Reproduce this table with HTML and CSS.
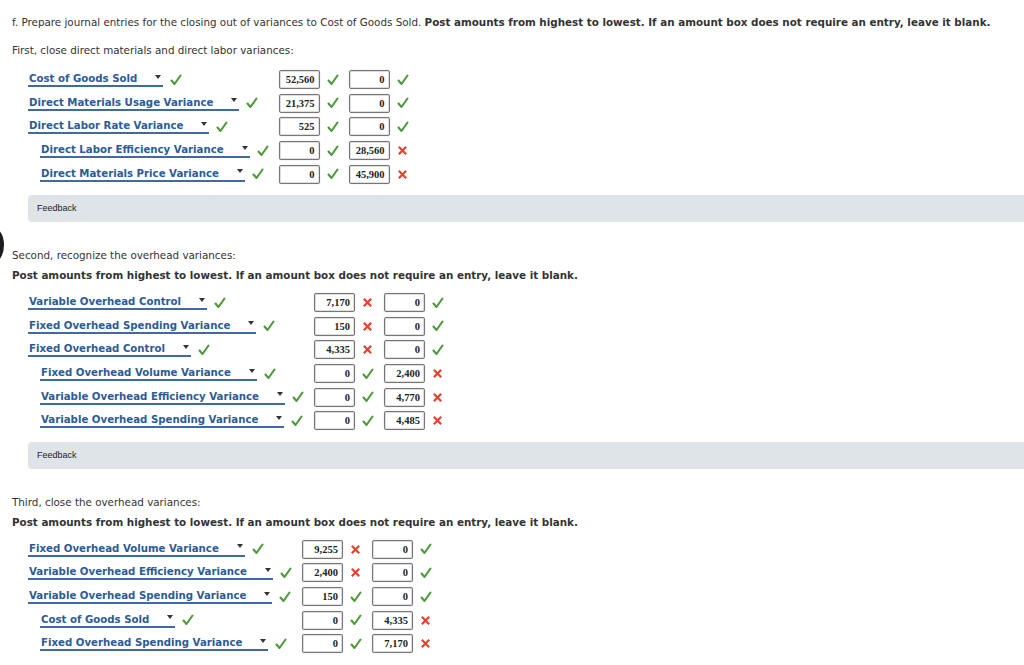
FILE: index.html
```html
<!DOCTYPE html>
<html>
<head>
<meta charset="utf-8">
<link rel="stylesheet" href="styles.css">
</head>
<body>
<div class="page">
  <div class="dot"></div>
  <p class="intro">f. Prepare journal entries for the closing out of variances to Cost of Goods Sold. <b>Post amounts from highest to lowest. If an amount box does not require an entry, leave it blank.</b></p>

  <p class="step s1">First, close direct materials and direct labor variances:</p>
  <div class="entry">
    <div class="lbl"><span class="sel">Cost of Goods Sold<i class="arr"></i></span><svg class="ok" viewBox="0 0 12 12"><path d="M1.5 6.5 L4.5 10 L10.5 1.5"/></svg></div>
    <span class="amt">52,560</span><svg class="ok" viewBox="0 0 12 12"><path d="M1.5 6.5 L4.5 10 L10.5 1.5"/></svg>
    <span class="amt">0</span><svg class="ok" viewBox="0 0 12 12"><path d="M1.5 6.5 L4.5 10 L10.5 1.5"/></svg>

    <div class="lbl"><span class="sel">Direct Materials Usage Variance<i class="arr"></i></span><svg class="ok" viewBox="0 0 12 12"><path d="M1.5 6.5 L4.5 10 L10.5 1.5"/></svg></div>
    <span class="amt">21,375</span><svg class="ok" viewBox="0 0 12 12"><path d="M1.5 6.5 L4.5 10 L10.5 1.5"/></svg>
    <span class="amt">0</span><svg class="ok" viewBox="0 0 12 12"><path d="M1.5 6.5 L4.5 10 L10.5 1.5"/></svg>

    <div class="lbl"><span class="sel">Direct Labor Rate Variance<i class="arr"></i></span><svg class="ok" viewBox="0 0 12 12"><path d="M1.5 6.5 L4.5 10 L10.5 1.5"/></svg></div>
    <span class="amt">525</span><svg class="ok" viewBox="0 0 12 12"><path d="M1.5 6.5 L4.5 10 L10.5 1.5"/></svg>
    <span class="amt">0</span><svg class="ok" viewBox="0 0 12 12"><path d="M1.5 6.5 L4.5 10 L10.5 1.5"/></svg>

    <div class="lbl cr"><span class="sel">Direct Labor Efficiency Variance<i class="arr"></i></span><svg class="ok" viewBox="0 0 12 12"><path d="M1.5 6.5 L4.5 10 L10.5 1.5"/></svg></div>
    <span class="amt">0</span><svg class="ok" viewBox="0 0 12 12"><path d="M1.5 6.5 L4.5 10 L10.5 1.5"/></svg>
    <span class="amt">28,560</span><svg class="no" viewBox="0 0 12 12"><path d="M2 2 L10 10 M10 2 L2 10"/></svg>

    <div class="lbl cr"><span class="sel">Direct Materials Price Variance<i class="arr"></i></span><svg class="ok" viewBox="0 0 12 12"><path d="M1.5 6.5 L4.5 10 L10.5 1.5"/></svg></div>
    <span class="amt">0</span><svg class="ok" viewBox="0 0 12 12"><path d="M1.5 6.5 L4.5 10 L10.5 1.5"/></svg>
    <span class="amt">45,900</span><svg class="no" viewBox="0 0 12 12"><path d="M2 2 L10 10 M10 2 L2 10"/></svg>
  </div>
  <div class="feedback">Feedback</div>

  <p class="step s2">Second, recognize the overhead variances:</p>
  <p class="post">Post amounts from highest to lowest. If an amount box does not require an entry, leave it blank.</p>
  <div class="entry">
    <div class="lbl"><span class="sel">Variable Overhead Control<i class="arr"></i></span><svg class="ok" viewBox="0 0 12 12"><path d="M1.5 6.5 L4.5 10 L10.5 1.5"/></svg></div>
    <span class="amt">7,170</span><svg class="no" viewBox="0 0 12 12"><path d="M2 2 L10 10 M10 2 L2 10"/></svg>
    <span class="amt">0</span><svg class="ok" viewBox="0 0 12 12"><path d="M1.5 6.5 L4.5 10 L10.5 1.5"/></svg>

    <div class="lbl"><span class="sel">Fixed Overhead Spending Variance<i class="arr"></i></span><svg class="ok" viewBox="0 0 12 12"><path d="M1.5 6.5 L4.5 10 L10.5 1.5"/></svg></div>
    <span class="amt">150</span><svg class="no" viewBox="0 0 12 12"><path d="M2 2 L10 10 M10 2 L2 10"/></svg>
    <span class="amt">0</span><svg class="ok" viewBox="0 0 12 12"><path d="M1.5 6.5 L4.5 10 L10.5 1.5"/></svg>

    <div class="lbl"><span class="sel">Fixed Overhead Control<i class="arr"></i></span><svg class="ok" viewBox="0 0 12 12"><path d="M1.5 6.5 L4.5 10 L10.5 1.5"/></svg></div>
    <span class="amt">4,335</span><svg class="no" viewBox="0 0 12 12"><path d="M2 2 L10 10 M10 2 L2 10"/></svg>
    <span class="amt">0</span><svg class="ok" viewBox="0 0 12 12"><path d="M1.5 6.5 L4.5 10 L10.5 1.5"/></svg>

    <div class="lbl cr"><span class="sel">Fixed Overhead Volume Variance<i class="arr"></i></span><svg class="ok" viewBox="0 0 12 12"><path d="M1.5 6.5 L4.5 10 L10.5 1.5"/></svg></div>
    <span class="amt">0</span><svg class="ok" viewBox="0 0 12 12"><path d="M1.5 6.5 L4.5 10 L10.5 1.5"/></svg>
    <span class="amt">2,400</span><svg class="no" viewBox="0 0 12 12"><path d="M2 2 L10 10 M10 2 L2 10"/></svg>

    <div class="lbl cr"><span class="sel">Variable Overhead Efficiency Variance<i class="arr"></i></span><svg class="ok" viewBox="0 0 12 12"><path d="M1.5 6.5 L4.5 10 L10.5 1.5"/></svg></div>
    <span class="amt">0</span><svg class="ok" viewBox="0 0 12 12"><path d="M1.5 6.5 L4.5 10 L10.5 1.5"/></svg>
    <span class="amt">4,770</span><svg class="no" viewBox="0 0 12 12"><path d="M2 2 L10 10 M10 2 L2 10"/></svg>

    <div class="lbl cr"><span class="sel">Variable Overhead Spending Variance<i class="arr"></i></span><svg class="ok" viewBox="0 0 12 12"><path d="M1.5 6.5 L4.5 10 L10.5 1.5"/></svg></div>
    <span class="amt">0</span><svg class="ok" viewBox="0 0 12 12"><path d="M1.5 6.5 L4.5 10 L10.5 1.5"/></svg>
    <span class="amt">4,485</span><svg class="no" viewBox="0 0 12 12"><path d="M2 2 L10 10 M10 2 L2 10"/></svg>
  </div>
  <div class="feedback">Feedback</div>

  <p class="step s3">Third, close the overhead variances:</p>
  <p class="post">Post amounts from highest to lowest. If an amount box does not require an entry, leave it blank.</p>
  <div class="entry">
    <div class="lbl"><span class="sel">Fixed Overhead Volume Variance<i class="arr"></i></span><svg class="ok" viewBox="0 0 12 12"><path d="M1.5 6.5 L4.5 10 L10.5 1.5"/></svg></div>
    <span class="amt">9,255</span><svg class="no" viewBox="0 0 12 12"><path d="M2 2 L10 10 M10 2 L2 10"/></svg>
    <span class="amt">0</span><svg class="ok" viewBox="0 0 12 12"><path d="M1.5 6.5 L4.5 10 L10.5 1.5"/></svg>

    <div class="lbl"><span class="sel">Variable Overhead Efficiency Variance<i class="arr"></i></span><svg class="ok" viewBox="0 0 12 12"><path d="M1.5 6.5 L4.5 10 L10.5 1.5"/></svg></div>
    <span class="amt">2,400</span><svg class="no" viewBox="0 0 12 12"><path d="M2 2 L10 10 M10 2 L2 10"/></svg>
    <span class="amt">0</span><svg class="ok" viewBox="0 0 12 12"><path d="M1.5 6.5 L4.5 10 L10.5 1.5"/></svg>

    <div class="lbl"><span class="sel">Variable Overhead Spending Variance<i class="arr"></i></span><svg class="ok" viewBox="0 0 12 12"><path d="M1.5 6.5 L4.5 10 L10.5 1.5"/></svg></div>
    <span class="amt">150</span><svg class="ok" viewBox="0 0 12 12"><path d="M1.5 6.5 L4.5 10 L10.5 1.5"/></svg>
    <span class="amt">0</span><svg class="ok" viewBox="0 0 12 12"><path d="M1.5 6.5 L4.5 10 L10.5 1.5"/></svg>

    <div class="lbl cr"><span class="sel">Cost of Goods Sold<i class="arr"></i></span><svg class="ok" viewBox="0 0 12 12"><path d="M1.5 6.5 L4.5 10 L10.5 1.5"/></svg></div>
    <span class="amt">0</span><svg class="ok" viewBox="0 0 12 12"><path d="M1.5 6.5 L4.5 10 L10.5 1.5"/></svg>
    <span class="amt">4,335</span><svg class="no" viewBox="0 0 12 12"><path d="M2 2 L10 10 M10 2 L2 10"/></svg>

    <div class="lbl cr"><span class="sel">Fixed Overhead Spending Variance<i class="arr"></i></span><svg class="ok" viewBox="0 0 12 12"><path d="M1.5 6.5 L4.5 10 L10.5 1.5"/></svg></div>
    <span class="amt">0</span><svg class="ok" viewBox="0 0 12 12"><path d="M1.5 6.5 L4.5 10 L10.5 1.5"/></svg>
    <span class="amt">7,170</span><svg class="no" viewBox="0 0 12 12"><path d="M2 2 L10 10 M10 2 L2 10"/></svg>
  </div>
</div>
</body>
</html>
```

FILE: styles.css
```css
html, body {
  margin: 0;
  padding: 0;
  background: #fff;
}
.page {
  position: relative;
  padding: 15px 0 0 12px;
  font-family: "DejaVu Sans", Verdana, sans-serif;
  font-size: 10.35px;
  color: #333;
  overflow: hidden;
  height: 665px;
  box-sizing: border-box;
}
p {
  margin: 0;
  line-height: 14px;
  white-space: nowrap;
}
.intro b, .post {
  font-weight: bold;
}
.s1 { margin-top: 14px; }
.s2 { margin-top: 26px; }
.s3 { margin-top: 26px; }
.post { margin-top: 6px; }
.entry {
  display: grid;
  grid-template-columns: max-content 41px 29px 41px 14px;
  grid-auto-rows: 23.6px;
  align-items: center;
  margin: 9px 0 0 16px;
}
.s1 + .entry {
  margin-top: 11px;
}
.lbl {
  display: flex;
  align-items: center;
  gap: 7px;
  padding-right: 10px;
}
.lbl.cr {
  padding-left: 12px;
}
.sel {
  display: inline-flex;
  align-items: center;
  color: #2c5b97;
  font-weight: bold;
  font-size: 10.2px;
  line-height: 13px;
  padding: 0 1px 0 1px;
  border-bottom: 2px solid #3f6ba3;
  white-space: nowrap;
}
.arr {
  display: inline-block;
  width: 0;
  height: 0;
  margin-left: 18px;
  margin-right: 1px;
  margin-top: -4px;
  border-left: 3px solid transparent;
  border-right: 3px solid transparent;
  border-top: 4px solid #333;
}
svg.ok, svg.no {
  width: 12px;
  height: 12px;
  fill: none;
}
svg.ok path {
  stroke: #4d9a3a;
  stroke-width: 2.1;
  stroke-linecap: round;
  stroke-linejoin: round;
}
svg.no {
  width: 11px;
  height: 11px;
}
svg.no path {
  stroke: #e8402e;
  stroke-width: 2.4;
}
.entry > svg {
  justify-self: start;
  margin-left: 7px;
}
.amt {
  box-sizing: border-box;
  height: 19px;
  width: 41px;
  border: 1px solid #777;
  border-radius: 2px;
  box-shadow: inset 0 0 0 1px #ddd, 0 0 1px #aaa;
  font-family: "Liberation Serif", "Times New Roman", serif;
  font-weight: bold;
  font-size: 10.5px;
  line-height: 17px;
  text-align: right;
  padding-right: 4px;
  color: #222;
}
.feedback {
  margin: 9px 0 0 16px;
  height: 27px;
  background: #dfe4e8;
  border-radius: 4px 0 0 4px;
  font-family: "Liberation Sans", Arial, sans-serif;
  font-size: 9px;
  line-height: 26px;
  padding-left: 9px;
  color: #222;
}
.dot {
  position: absolute;
  left: -16px;
  top: 228px;
  width: 20px;
  height: 34px;
  border-radius: 50%;
  background: #1c1c1c;
}
```
